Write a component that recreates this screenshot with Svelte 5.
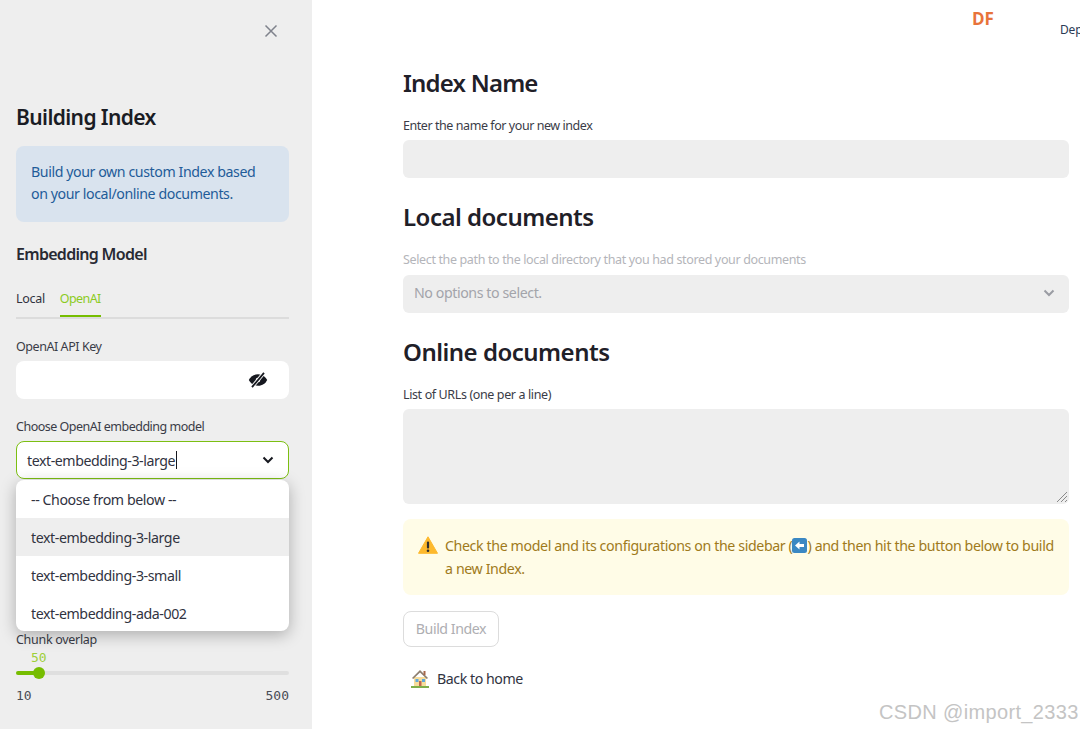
<script>
  const options = ['-- Choose from below --', 'text-embedding-3-large', 'text-embedding-3-small', 'text-embedding-ada-002'];
</script>

<div class="page">
  <aside class="sidebar">
    <div class="close-row">
      <svg width="14" height="14" viewBox="0 0 14 14" fill="none" stroke="#7f828c" stroke-width="1.5"><path d="M1.500 1.500l11 11M12.500 1.500l-11 11" /></svg>
    </div>
    <h2>Building Index</h2>
    <div class="info">Build your own custom Index based on your local/online documents.</div>
    <h3>Embedding Model</h3>
    <div class="tabs">
      <span class="tab">Local</span>
      <span class="tab active">OpenAI</span>
    </div>
    <div class="label key-label">OpenAI API Key</div>
    <div class="key-input">
      <svg width="20" height="16" viewBox="0 0 20 16">
        <path fill="#16181f" d="M10 2.200C5.600 2.200 2.200 5 .8 8c1.400 3 4.800 5.800 9.200 5.800S17.800 11 19.200 8C17.800 5 14.400 2.200 10 2.200z" />
        <circle cx="10" cy="8" r="2.300" fill="#fff" />
        <path d="M16 .8L4 15.200" stroke="#fff" stroke-width="3.600" />
        <path d="M16 .8L4 15.200" stroke="#16181f" stroke-width="1.800" />
      </svg>
    </div>
    <div class="label model-label">Choose OpenAI embedding model</div>
    <div class="select-wrap">
      <div class="select focused">
        <span>text-embedding-3-large</span><i class="caret"></i>
        <svg class="chev" width="12" height="8" viewBox="0 0 12 8" fill="none" stroke="#16181f" stroke-width="2"><path d="M1.500 1.500L6 6l4.500-4.500" /></svg>
      </div>
      <ul class="menu">
        {#each options as o, i}
          <li class:hover={i === 1}>{o}</li>
        {/each}
      </ul>
    </div>
    <div class="label overlap-label">Chunk overlap</div>
    <div class="slider">
      <div class="value">50</div>
      <div class="track"><div class="fill"></div><div class="thumb"></div></div>
      <div class="ends"><span>10</span><span>500</span></div>
    </div>
  </aside>

  <main class="main">
    <div class="df">DF</div>
    <div class="dep">Dep</div>
    <h1 class="first">Index Name</h1>
    <div class="label">Enter the name for your new index</div>
    <div class="field"></div>
    <h1>Local documents</h1>
    <div class="label disabled">Select the path to the local directory that you had stored your documents</div>
    <div class="field select-disabled">
      <span>No options to select.</span>
      <svg width="12" height="8" viewBox="0 0 12 8" fill="none" stroke="#9a9ca3" stroke-width="2"><path d="M1.500 1.500L6 6l4.500-4.500" /></svg>
    </div>
    <h1>Online documents</h1>
    <div class="label urls">List of URLs (one per a line)</div>
    <div class="field area">
      <svg class="grip" width="12" height="12" viewBox="0 0 12 12" stroke="#8a8a8a" stroke-width="1" fill="none"><path d="M1 11L11 1M5 11l6-6M9 11l2-2" /></svg>
    </div>
    <div class="alert">
      <svg class="warn" width="20" height="18" viewBox="0 0 20 18">
        <path d="M10 .8L19.500 17.300H.5z" fill="#fdb92e" stroke="#fdb92e" stroke-linejoin="round" />
        <rect x="8.900" y="5.500" width="2.200" height="7" rx="1" fill="#2f2f2f" />
        <circle cx="10" cy="14.700" r="1.300" fill="#2f2f2f" />
      </svg>
      <p>Check the model and its configurations on the sidebar (<svg class="back" width="15" height="15" viewBox="0 0 15 15"><rect width="15" height="15" rx="2.500" fill="#3b88c3" /><path d="M3 7.500L7.500 3.500V6h4.500v3H7.500v2.500z" fill="#fff" /></svg>) and then hit the button below to build a new Index.</p>
    </div>
    <button class="build" disabled>Build Index</button>
    <div class="home">
      <svg width="18" height="19" viewBox="0 0 18 19">
        <rect x="0" y="17" width="18" height="2" fill="#7fae4a" />
        <path d="M3 8h12v9H3z" fill="#f7dd9c" />
        <path d="M9 1L1 9l1.200 1L9 3.500 15.800 10 17 9z" fill="#8d7f70" />
        <rect x="12.500" y="2" width="2" height="4" fill="#a5674a" />
        <rect x="4.500" y="10" width="3" height="3" fill="#5ea8dc" />
        <rect x="11" y="10" width="3" height="3" fill="#5ea8dc" />
        <rect x="8" y="12" width="2.500" height="5" fill="#c1694f" />
      </svg>
      <span>Back to home</span>
    </div>
  </main>
  <div class="watermark">CSDN @import_2333</div>
</div>

<style>
  :global(body) { margin: 0; background: #fff; }
  .page {
    position: relative;
    display: flex;
    width: 1080px;
    height: 729px;
    overflow: hidden;
    font-family: "Noto Sans", "Liberation Sans", sans-serif;
    color: #31333f;
  }
  .sidebar {
    box-sizing: border-box;
    flex: 0 0 312px;
    height: 729px;
    padding: 0 23px 0 16px;
    background: #eeeeee;
    display: flex;
    flex-direction: column;
  }
  .close-row { height: 38px; padding-top: 24px; padding-right: 11px; display: flex; justify-content: flex-end; }
  h2 { margin: 42px 0 0; height: 42px; font-size: 21px; line-height: 27px; font-weight: 600; color: #1a1c24; letter-spacing: -.6px; }
  .info {
    box-sizing: border-box;
    height: 76px;
    padding: 15px;
    border-radius: 8px;
    background: #d9e3ee;
    color: #1f5c99;
    font-size: 14.200px;
    line-height: 22px;
    letter-spacing: -.42px;
  }
  h3 { margin: 21px 0 0; font-size: 16px; line-height: 22px; font-weight: 600; color: #282a33; letter-spacing: -.7px; }
  .tabs { display: flex; gap: 15px; margin-top: 21px; height: 31px; border-bottom: 2px solid #dcdcdc; }
  .tab { font-size: 12.500px; line-height: 18px; height: 31px; box-sizing: border-box; padding-top: 4px; color: #31333f; letter-spacing: -.3px; }
  .tab.active { color: #8ccb1e; border-bottom: 2px solid #76bd00; letter-spacing: -.6px; }
  .label { font-size: 12.500px; line-height: 16px; color: #3a3c47; letter-spacing: -.44px; }
  .key-label { margin-top: 20px; }
  .key-input {
    box-sizing: border-box;
    height: 38px;
    margin-top: 6px;
    padding-right: 21px;
    border-radius: 8px;
    background: #fff;
    display: flex;
    align-items: center;
    justify-content: flex-end;
  }
  .model-label { margin-top: 20px; letter-spacing: -.5px; }
  .select-wrap { position: relative; margin-top: 6px; }
  .select {
    box-sizing: border-box;
    height: 38px;
    padding: 0 14px 0 10px;
    border-radius: 8px;
    background: #fff;
    font-size: 14.200px;
    letter-spacing: -.45px;
    display: flex;
    align-items: center;
  }
  .select.focused { border: 1px solid #7cbf12; }
  .caret { width: 1px; height: 18px; background: #16181f; margin-left: 1px; }
  .chev { margin-left: auto; }
  .menu {
    position: absolute;
    top: 39px;
    left: 0;
    right: 0;
    margin: 0;
    padding: 0;
    list-style: none;
    background: #fff;
    border-radius: 8px;
    overflow: hidden;
    box-shadow: 0 4px 16px rgba(0, 0, 0, .28);
    z-index: 2;
  }
  .menu li { height: 38px; box-sizing: border-box; padding: 1px 15px 0; font-size: 14.200px; line-height: 37px; letter-spacing: -.42px; }
  .menu li:last-child { height: 37px; }
  .menu li.hover { background: #eeeeee; }
  .overlap-label { margin-top: 153px; letter-spacing: -.3px; }
  .slider { font-family: "DejaVu Sans Mono", "Liberation Mono", monospace; font-size: 13px; }
  .value { margin: 2px 0 0 15px; line-height: 16px; color: #9dcf3a; }
  .track { position: relative; height: 4px; margin-top: 5px; border-radius: 2px; background: #dfdfdf; }
  .fill { width: 23px; height: 4px; border-radius: 2px; background: #76bd00; }
  .thumb { position: absolute; left: 17px; top: -4px; width: 12px; height: 12px; border-radius: 50%; background: #76bd00; }
  .ends { display: flex; justify-content: space-between; margin-top: 13px; line-height: 16px; color: #4a4c55; }

  .main { position: relative; flex: 1; box-sizing: border-box; padding: 0 11px 0 91px; }
  .df { position: absolute; left: 660px; top: 9px; font: 700 17px/20px "Open Sans", sans-serif; color: #e8733a; }
  .dep { position: absolute; left: 748px; top: 22px; font-size: 12px; line-height: 16px; color: #2b3a55; letter-spacing: -.2px; }
  h1 { margin: 22px 0 0; font-size: 24px; line-height: 33px; height: 34px; font-weight: 600; color: #1f2028; letter-spacing: -.5px; }
  h1.first { margin-top: 66px; letter-spacing: -.8px; }
  .main .label { margin-top: 17px; line-height: 17px; }
  .main .label.disabled { color: #b4b5ba; letter-spacing: -.36px; }
  .main .label.urls { letter-spacing: -.38px; }
  .field { height: 38px; margin-top: 6px; border-radius: 6px; background: #eeeeee; }
  .select-disabled {
    box-sizing: border-box;
    margin-top: 7px;
    padding: 0 14px 2px 11px;
    display: flex;
    align-items: center;
    justify-content: space-between;
    font-size: 14.200px;
    color: #a3a4aa;
    letter-spacing: -.42px;
  }
  .select-disabled span { margin-bottom: 2px; }
  .area { position: relative; height: 95px; }
  .grip { position: absolute; right: 1px; bottom: 1px; }
  .alert {
    box-sizing: border-box;
    display: flex;
    height: 76px;
    margin-top: 15px;
    padding: 15px 14px 0 15px;
    border-radius: 8px;
    background: #fffce7;
    color: #a07a1b;
  }
  .warn { flex: none; margin: 2px 7px 0 0; }
  .alert p { margin: 0; font-size: 14.200px; line-height: 23px; letter-spacing: -.38px; }
  .back { vertical-align: -2px; }
  .build {
    display: block;
    box-sizing: border-box;
    width: 96px;
    height: 36px;
    margin-top: 16px;
    padding: 0 0 2px;
    border: 1px solid #dcdcdc;
    border-radius: 8px;
    background: #fff;
    color: #aeaeb2;
    font: 14.200px "Noto Sans", sans-serif;
    letter-spacing: -.45px;
  }
  .home { display: flex; align-items: center; gap: 8px; margin: 21px 0 0 8px; height: 20px; font-size: 14.200px; color: #31333f; letter-spacing: -.45px; }
  .watermark { position: absolute; left: 879px; top: 700px; white-space: nowrap; font: 20px/24px "Liberation Sans", sans-serif; color: #c4c4c4; letter-spacing: .35px; }
</style>
